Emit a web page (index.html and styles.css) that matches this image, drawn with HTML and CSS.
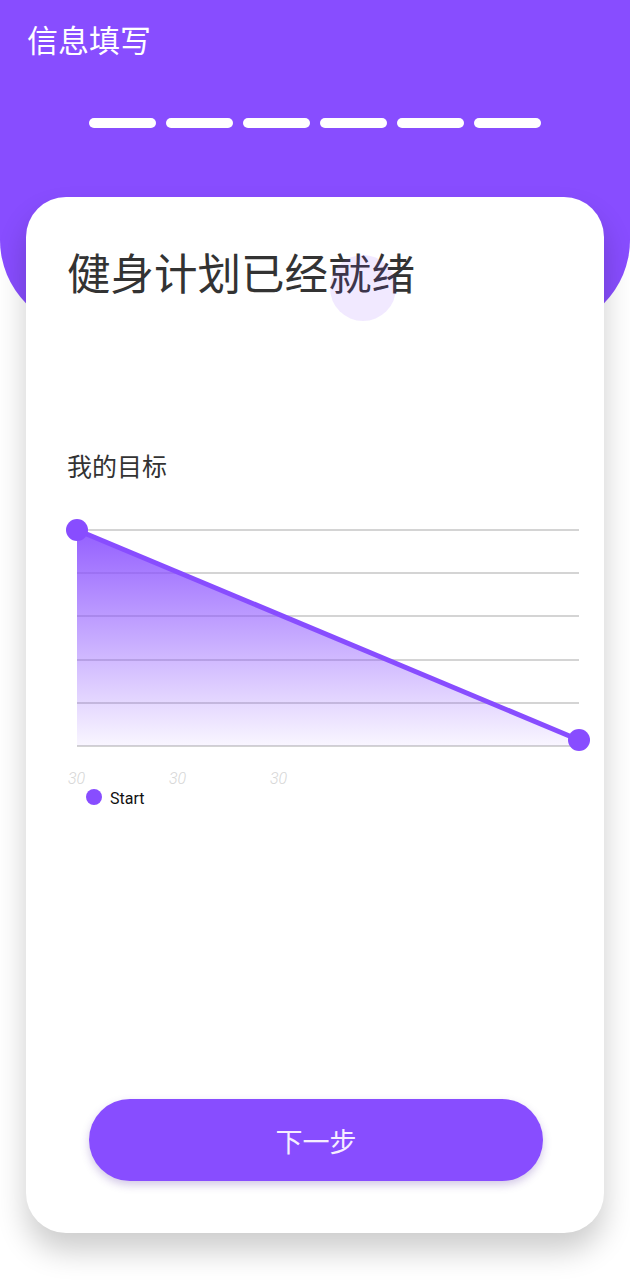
FILE: index.html
```html
<!DOCTYPE html>
<html lang="zh-CN">
<head>
  <meta charset="UTF-8" />
  <meta name="viewport" content="width=device-width, initial-scale=1.0" />
  <title>信息填写</title>
  <link rel="stylesheet" href="styles.css">
</head>
<body>

  <header class="top">
    <h1 class="top-title">信息填写</h1>
    <div class="steps">
      <span class="step"></span>
      <span class="step"></span>
      <span class="step"></span>
      <span class="step"></span>
      <span class="step"></span>
      <span class="step"></span>
    </div>
  </header>

  <main class="card">
    <div class="ripple"></div>
    <h2 class="card-title">健身计划已经就绪</h2>
    <h3 class="goal-title">我的目标</h3>

    <svg class="chart" width="530" height="300" viewBox="0 0 530 300">
      <defs>
        <linearGradient id="fillGrad" x1="0" y1="0" x2="0" y2="1">
          <stop offset="0" stop-color="#884dff" stop-opacity="0.9" />
          <stop offset="1" stop-color="#884dff" stop-opacity="0.05" />
        </linearGradient>
      </defs>
      <g stroke="#c6c6c6" stroke-width="1.5">
        <line x1="21" y1="19" x2="523" y2="19" />
        <line x1="21" y1="62" x2="523" y2="62" />
        <line x1="21" y1="105" x2="523" y2="105" />
        <line x1="21" y1="149" x2="523" y2="149" />
        <line x1="21" y1="192" x2="523" y2="192" />
        <line x1="21" y1="235" x2="523" y2="235" />
      </g>
      <polygon points="21,19 523,229 523,235 21,235" fill="url(#fillGrad)" />
      <line x1="21" y1="19" x2="523" y2="229" stroke="#884dff" stroke-width="5" />
      <circle cx="21" cy="19" r="11" fill="#884dff" />
      <circle cx="523" cy="229" r="11" fill="#884dff" />
      <g class="axis-label">
        <text x="12" y="273">30</text>
        <text x="113" y="273">30</text>
        <text x="214" y="273">30</text>
      </g>
      <circle cx="38" cy="286" r="8" fill="#884dff" />
      <text class="legend" x="54" y="293">Start</text>
    </svg>

    <button class="next-btn">下一步</button>
  </main>

</body>
</html>
```

FILE: styles.css
```css
* {
  margin: 0;
  padding: 0;
  box-sizing: border-box;
}

body {
  width: 630px;
  min-height: 1280px;
  background: #ffffff;
  font-family: 'Noto Sans CJK SC', 'Noto Sans', sans-serif;
  overflow: hidden;
}

/* purple header */
.top {
  height: 330px;
  background: #884dff;
  border-radius: 0 0 90px 90px;
  padding: 23px 0 0 27px;
}

.top-title {
  font-size: 31px;
  line-height: 1;
  font-weight: 400;
  color: #ffffff;
}

.steps {
  display: flex;
  justify-content: center;
  gap: 10px;
  margin: 64px 0 0 -27px;
}

.step {
  width: 67px;
  height: 10px;
  border-radius: 5px;
  background: #ffffff;
}

/* white card */
.card {
  position: relative;
  display: flex;
  flex-direction: column;
  height: 1036px;
  margin: -133px 26px 0;
  padding: 53px 41px 52px;
  background: #ffffff;
  border-radius: 40px;
  box-shadow: 0 18px 30px rgba(0, 0, 0, 0.2);
}

.ripple {
  position: absolute;
  left: 304px;
  top: 58px;
  width: 66px;
  height: 66px;
  border-radius: 50%;
  background: rgba(136, 77, 255, 0.12);
}

.card-title {
  font-size: 43.5px;
  line-height: 1;
  font-weight: 400;
  color: #333333;
}

.goal-title {
  margin-top: 159px;
  font-size: 25px;
  line-height: 1;
  font-weight: 400;
  color: #333333;
}

.chart {
  display: block;
  margin: 33px 0 0 -11px;
  overflow: visible;
}

.axis-label text {
  font-family: Roboto, 'Liberation Sans', sans-serif;
  font-size: 16px;
  font-style: italic;
  font-weight: 300;
  fill: #d6d6d6;
}

.legend {
  font-family: Roboto, 'Liberation Sans', sans-serif;
  font-size: 16px;
  fill: #111111;
}

.next-btn {
  width: 454px;
  height: 82px;
  margin: auto 0 0 22px;
  border: none;
  border-radius: 41px;
  background: #884dff;
  color: #f6eeff;
  font-family: 'Noto Sans CJK SC', sans-serif;
  font-size: 27px;
  box-shadow: 0 4px 8px rgba(80, 40, 160, 0.25);
}
```
